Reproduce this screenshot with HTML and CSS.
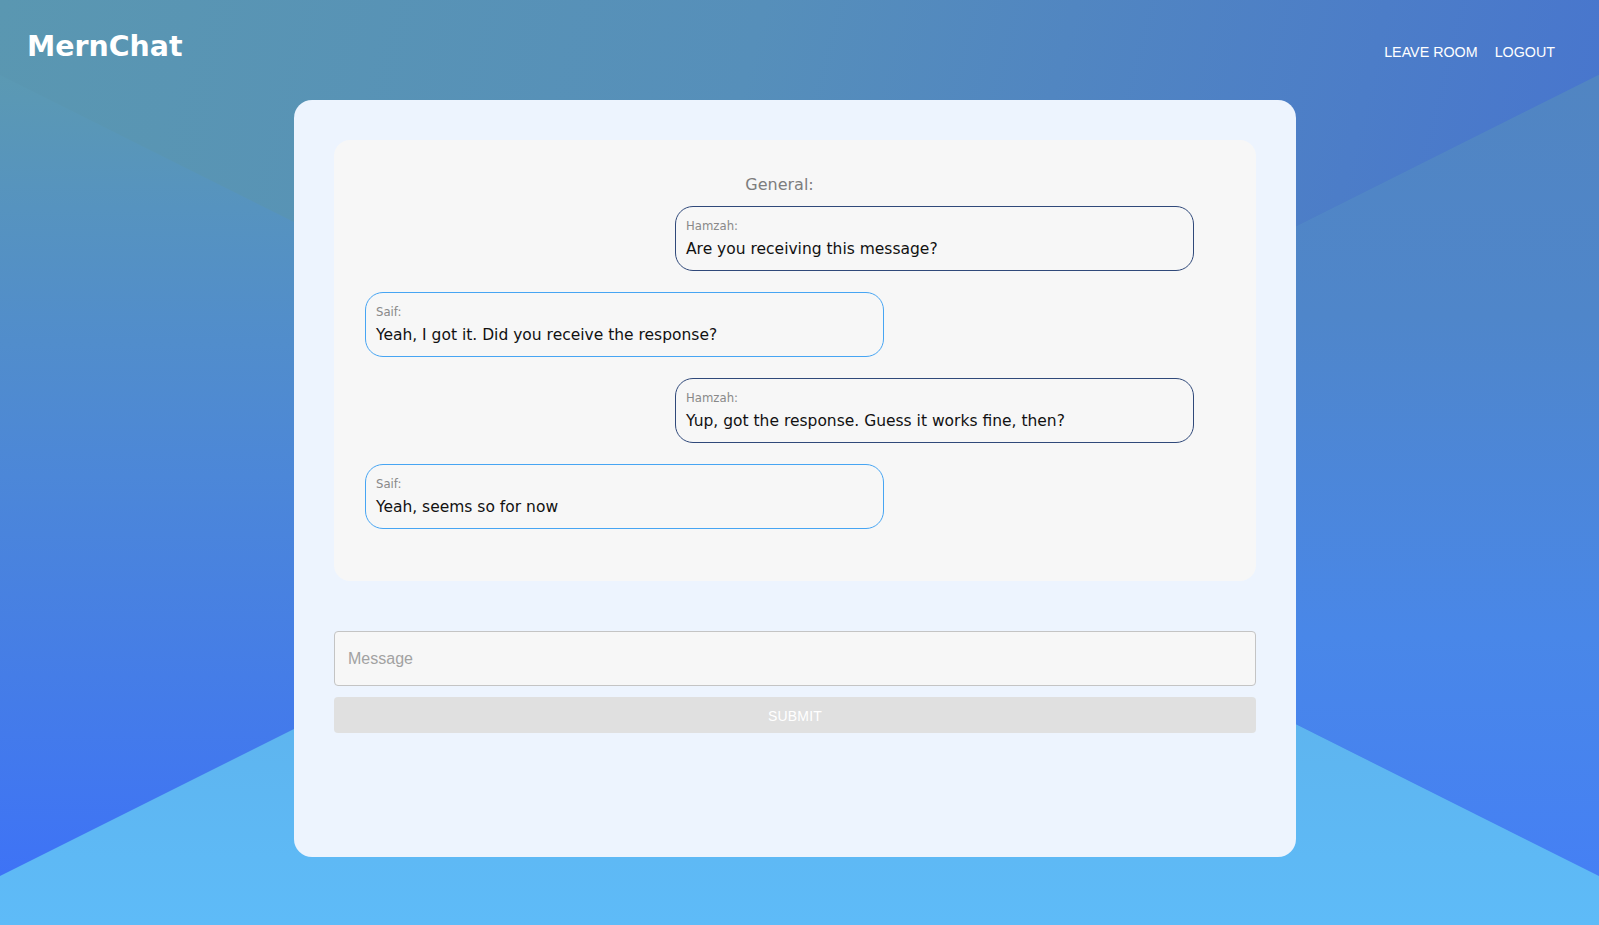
FILE: index.html
```html
<!DOCTYPE html>
<html lang="en">
<head>
<meta charset="utf-8">
<title>MernChat</title>
<link rel="stylesheet" href="styles.css">
</head>
<body>
<svg class="backdrop" viewBox="0 0 1599 925" preserveAspectRatio="none" aria-hidden="true">
  <defs>
    <linearGradient id="sideGrad" gradientUnits="userSpaceOnUse" x1="0" y1="75" x2="0" y2="876">
      <stop offset="0" stop-color="#5b99b3"/>
      <stop offset="0.5" stop-color="#4c87d8"/>
      <stop offset="1" stop-color="#3e73f6"/>
    </linearGradient>
    <linearGradient id="rightGrad" gradientUnits="userSpaceOnUse" x1="0" y1="75" x2="0" y2="876">
      <stop offset="0" stop-color="#5185c2"/>
      <stop offset="0.3" stop-color="#4f86ca"/>
      <stop offset="0.7" stop-color="#4987e8"/>
      <stop offset="1" stop-color="#4580f4"/>
    </linearGradient>
    <linearGradient id="vGrad" gradientUnits="userSpaceOnUse" x1="0" y1="0" x2="1599" y2="400">
      <stop offset="0" stop-color="#5a97b1"/>
      <stop offset="0.45" stop-color="#568fba"/>
      <stop offset="1" stop-color="#4774cf"/>
    </linearGradient>
    <linearGradient id="bottomGrad" gradientUnits="userSpaceOnUse" x1="0" y1="476" x2="0" y2="925">
      <stop offset="0" stop-color="#5aa9e3"/>
      <stop offset="0.5" stop-color="#5eb4ee"/>
      <stop offset="1" stop-color="#5ebbf8"/>
    </linearGradient>
  </defs>
  <rect x="0" y="0" width="1599" height="925" fill="url(#sideGrad)"/>
  <polygon points="1599,75 800,475 1599,876" fill="url(#rightGrad)"/>
  <polygon points="0,0 1599,0 1599,75 800,475 0,75" fill="url(#vGrad)"/>
  <polygon points="0,876 800,476 1599,876 1599,925 0,925" fill="url(#bottomGrad)"/>
</svg>

<div class="page">
  <header class="topbar">
    <div class="logo">MernChat</div>
    <nav class="nav">
      <a class="nav-btn" href="#">LEAVE ROOM</a>
      <a class="nav-btn" href="#">LOGOUT</a>
    </nav>
  </header>

  <main class="stage">
    <section class="card">
      <div class="chat-panel">
        <h2 class="room-title">General:</h2>
        <div class="messages">
          <div class="bubble bubble-self">
            <div class="author">Hamzah:</div>
            <div class="text">Are you receiving this message?</div>
          </div>
          <div class="bubble bubble-other">
            <div class="author">Saif:</div>
            <div class="text">Yeah, I got it. Did you receive the response?</div>
          </div>
          <div class="bubble bubble-self">
            <div class="author">Hamzah:</div>
            <div class="text">Yup, got the response. Guess it works fine, then?</div>
          </div>
          <div class="bubble bubble-other">
            <div class="author">Saif:</div>
            <div class="text">Yeah, seems so for now</div>
          </div>
        </div>
      </div>

      <form class="composer">
        <input class="msg-input" type="text" placeholder="Message">
        <button class="submit-btn" type="button">SUBMIT</button>
      </form>
    </section>
  </main>
</div>
</body>
</html>
```

FILE: styles.css
```css
html, body {
  margin: 0;
  height: 100%;
}

body {
  position: relative;
  overflow: hidden;
  background: #4c87d8;
  font-family: "DejaVu Sans", sans-serif;
}

.backdrop {
  position: absolute;
  top: 0;
  left: 0;
  width: 100%;
  height: 100%;
  display: block;
  z-index: 0;
}

.page {
  position: relative;
  z-index: 1;
}

.topbar {
  display: flex;
  justify-content: space-between;
  align-items: flex-start;
  height: 100px;
  box-sizing: border-box;
  padding: 0 36px 0 27px;
}

.logo {
  margin-top: 30px;
  font-family: "DejaVu Sans", sans-serif;
  font-weight: 700;
  font-size: 28.4px;
  line-height: 34px;
  color: #ffffff;
}

.nav {
  display: flex;
  gap: 1px;
  margin-top: 34px;
}

.nav-btn {
  padding: 6px 8px;
  font-family: "Liberation Sans", Arial, sans-serif;
  font-size: 14.3px;
  line-height: 24px;
  color: #ffffff;
  text-decoration: none;
}

.stage {
  padding-left: 294px;
}

.card {
  box-sizing: border-box;
  width: 1002px;
  height: 757px;
  padding: 40px;
  background: #edf4fe;
  border-radius: 18px;
  display: flex;
  flex-direction: column;
}

.chat-panel {
  box-sizing: border-box;
  height: 441px;
  padding: 33px 62px 0 31px;
  background: #f7f7f7;
  border-radius: 16px;
}

.room-title {
  margin: 0;
  text-align: center;
  font-family: "DejaVu Sans", sans-serif;
  font-weight: 400;
  font-size: 16px;
  line-height: 24px;
  color: #7d7d7d;
}

.messages {
  display: flex;
  flex-direction: column;
  gap: 21px;
  margin-top: 9px;
}

.bubble {
  box-sizing: border-box;
  width: 519px;
  height: 65px;
  padding: 11px 10px 0 10px;
  border: 1px solid;
  border-radius: 18px;
}

.bubble-self {
  margin-left: auto;
  border-color: #30497a;
}

.bubble-other {
  border-color: #47a5f3;
}

.author {
  font-size: 11.7px;
  line-height: 16px;
  color: #898989;
}

.text {
  margin-top: 3px;
  font-size: 15.5px;
  line-height: 24px;
  color: #111111;
}

.composer {
  margin: 50px 0 0 0;
  display: flex;
  flex-direction: column;
  gap: 11px;
}

.msg-input {
  display: block;
  box-sizing: border-box;
  width: 100%;
  height: 55px;
  margin: 0;
  padding: 1px 13px 0 13px;
  border: 1px solid #c4c4c4;
  border-radius: 4px;
  background: #f7f7f7;
  font-family: "Liberation Sans", Arial, sans-serif;
  font-size: 16px;
  color: #333333;
  outline: none;
}

.msg-input::placeholder {
  color: #a2a2a2;
}

.submit-btn {
  display: block;
  width: 100%;
  height: 36px;
  margin: 0;
  padding: 2px 0 0 0;
  border: 0;
  border-radius: 4px;
  background: #e0e0e0;
  color: #ffffff;
  font-family: "Liberation Sans", Arial, sans-serif;
  font-size: 14px;
  letter-spacing: 0.2px;
}
```
